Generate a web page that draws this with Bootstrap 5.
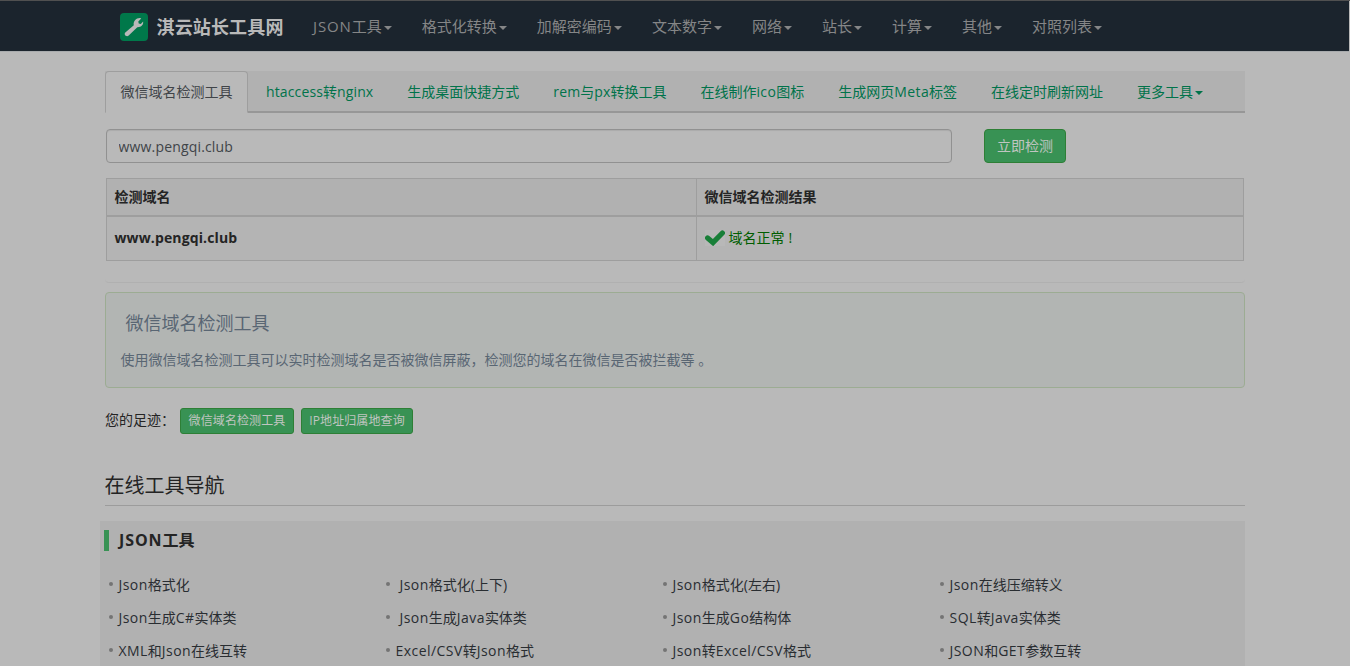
<!DOCTYPE html>
<html lang="zh-CN">
<head>
<meta charset="utf-8">
<meta name="viewport" content="width=device-width, initial-scale=1">
<title>微信域名检测工具</title>
<link rel="stylesheet" href="https://cdn.jsdelivr.net/npm/bootstrap@5.3.0/dist/css/bootstrap.min.css">
<style>
body{background:#b9b9b9;color:#242424;font:14px/20px "Open Sans","Noto Sans CJK SC",sans-serif;height:666px;overflow:hidden;border-top:1px solid #505050}
a{text-decoration:none}
.lt{letter-spacing:.13px}
.tools .lt{letter-spacing:.45px}
.topbar .lt,.toolbox h2 .lt{letter-spacing:.9px}
.topbar{background:#1b242d;height:51px;border-bottom:1px solid #a8abad;margin-right:1px;padding:0}
.page{width:1140px;margin:0 auto}
.brand{font-size:18px;font-weight:700;color:#b9b9b9;width:193.5px;padding-left:15px;letter-spacing:.15px;white-space:nowrap;padding-top:1px}
.brand svg{margin-right:9px;flex:none}
.topbar .nav-link{font-size:15px;color:#858687;padding:15px;white-space:nowrap}
.caret{display:inline-block;border-top:4px solid;border-left:4px solid transparent;border-right:4px solid transparent;margin-left:2px;vertical-align:middle}
.tooltabs{background:#b1b1b1;margin-top:19px;height:42px;border-bottom:2px solid #979797}
.tooltabs .nav-link{color:#00734a;padding:10px 15px;border:1px solid transparent;margin:0 2px 0 0;white-space:nowrap;height:42px;border-radius:4px 4px 0 0}
.tooltabs .nav-link.active{background:#b9b9b9;color:#404448;border-color:#9e9e9e #9e9e9e #b9b9b9;padding-left:14.5px;padding-right:14.5px}
.tooltabs .short{letter-spacing:.4px}
.domain{width:846px;height:34px;border:1px solid #919191;background:#b9b9b9;color:#404448;font-size:14px;padding:6px 12px 6px 11.5px;border-radius:4px;box-shadow:inset 0 1px 1px rgba(0,0,0,.075);letter-spacing:.17px}
.btn-go,.btn-go:hover{background:#389254;border:1px solid #2e7f36;color:#c0c5c1;border-radius:4px}
.go{font-size:14px;line-height:20px;padding:6px 12px;margin-left:32px;width:82px;height:34px}
.step{font-size:12px;line-height:18px;padding:3px 7px;height:26px;border-radius:3px;white-space:nowrap;letter-spacing:.1px}
.result{width:1138px;margin:15px 1px 0;border-collapse:collapse;table-layout:fixed}
.result th,.result td{border:1px solid #9e9e9e;padding:8px 8px 8px 7.5px}
.result thead th{background:#b1b1b1;height:37px;padding-top:8px;padding-bottom:7px;border-bottom-width:2px}
.result tbody{background:#b4b4b4}
.result tbody td{height:45px}
.ok{color:#005d00}
.ok svg{background:#b8b8b8;margin-right:4px}
.panelend{height:22px;border-bottom:1px solid #b0b0b0;border-radius:0 0 4px 4px}
.intro{border:1px solid #9cac93;border-radius:4px;background:#b2b5b3;color:#596673;height:96px;margin-top:9px;padding:19px 14.5px}
.intro h1{font-size:18px;line-height:22px;margin:0 0 16px 5px;font-weight:400}
.navtitle{font-size:20px;line-height:28px;font-weight:400;margin:38px 0 0 -.5px;padding-bottom:5px;border-bottom:1px solid #9c9c9c}
.toolbox{background:#b1b1b1;margin:15px 0 0 -5px;height:160px;padding:9px 0 0 4px}
.toolbox h2{font-size:16px;line-height:21px;font-weight:700;border-left:5px solid #389254;padding-left:10px;margin:0 0 17px}
.tools{display:grid;grid-template-columns:repeat(4,277px);grid-auto-rows:33px;margin:0;padding:0 0 0 5px;list-style:none}
.tools li{line-height:33px;color:#292d31;white-space:nowrap;display:flex;align-items:center}
.tools li::before{content:"";width:4px;height:4px;border-radius:50%;background:#747474;margin:0 5.5px 1px 0;flex:none}
</style>
</head>
<body>
<nav class="topbar">
  <div class="page d-flex">
    <a href="#" class="brand d-flex align-items-center"><svg width="28" height="28" viewBox="0 0 28 28"><rect width="28" height="28" rx="4" fill="#00784a"/><path fill="#b9b9b9" d="M5.300 19.600 13.800 12.200c-.8-3.800 2.300-7.300 6.400-7.100l1 .3-2.900 3 .4 2 2.100.5 2.300-2.400c.6 3.500-2.100 5.900-5.800 5.700L8.700 22.600c-2.200 1.900-5.300-.9-3.400-3z"/></svg>淇云站长工具网</a>
    <div class="d-flex">
      <a class="nav-link" href="#"><span class="lt">JSON</span>工具<i class="caret"></i></a>
      <a class="nav-link" href="#">格式化转换<i class="caret"></i></a>
      <a class="nav-link" href="#">加解密编码<i class="caret"></i></a>
      <a class="nav-link" href="#">文本数字<i class="caret"></i></a>
      <a class="nav-link" href="#">网络<i class="caret"></i></a>
      <a class="nav-link" href="#">站长<i class="caret"></i></a>
      <a class="nav-link" href="#">计算<i class="caret"></i></a>
      <a class="nav-link" href="#">其他<i class="caret"></i></a>
      <a class="nav-link" href="#">对照列表<i class="caret"></i></a>
    </div>
  </div>
</nav>
<main class="page">
  <div class="tooltabs d-flex">
    <a class="nav-link active" href="#">微信域名检测工具</a>
    <a class="nav-link" href="#"><span class="lt">htaccess</span>转<span class="lt">nginx</span></a>
    <a class="nav-link" href="#">生成桌面快捷方式</a>
    <a class="nav-link" href="#"><span class="lt">rem</span>与<span class="lt">px</span>转换工具</a>
    <a class="nav-link" href="#">在线制作<span class="lt short">ico</span>图标</a>
    <a class="nav-link" href="#">生成网页<span class="lt short">Meta</span>标签</a>
    <a class="nav-link" href="#">在线定时刷新网址</a>
    <a class="nav-link" href="#">更多工具<i class="caret"></i></a>
  </div>
  <div class="d-flex" style="margin:16px 0 0 1px">
    <input class="domain" value="www.pengqi.club" aria-label="域名">
    <button class="btn btn-go go">立即检测</button>
  </div>
  <table class="result">
    <colgroup><col style="width:590px"><col></colgroup>
    <thead><tr><th>检测域名</th><th>微信域名检测结果</th></tr></thead>
    <tbody><tr><td><b class="lt">www.pengqi.club</b></td><td><div class="ok d-flex align-items-center"><svg width="20" height="16" viewBox="0 0 20 16"><path d="M2.600 8 8 12.600 17.400 3" fill="none" stroke="#187f38" stroke-width="5.200" stroke-linecap="round"/></svg>域名正常<span class="ps-1">!</span></div></td></tr></tbody>
  </table>
  <div class="panelend"></div>
  <section class="intro"><h1>微信域名检测工具</h1><div>使用微信域名检测工具可以实时检测域名是否被微信屏蔽，检测您的域名在微信是否被拦截等 。</div></section>
  <div class="d-flex" style="margin-top:20px"><span style="width:75px;margin-top:2px">您的足迹：</span><a class="btn btn-go step" style="width:114px" href="#">微信域名检测工具</a><a class="btn btn-go step" style="width:112px;margin-left:7px" href="#"><span class="lt">IP</span>地址归属地查询</a></div>
  <h2 class="navtitle">在线工具导航</h2>
  <section class="toolbox">
    <h2><span class="lt">JSON</span>工具</h2>
    <ul class="tools">
      <li><span><span class="lt">Json</span>格式化</span></li><li><span class="ps-1"><span class="lt">Json</span>格式化(上下)</span></li><li><span><span class="lt">Json</span>格式化(左右)</span></li><li><span><span class="lt">Json</span>在线压缩转义</span></li>
      <li><span><span class="lt">Json</span>生成<span class="lt">C#</span>实体类</span></li><li><span class="ps-1"><span class="lt">Json</span>生成<span class="lt">Java</span>实体类</span></li><li><span><span class="lt">Json</span>生成<span class="lt">Go</span>结构体</span></li><li><span><span class="lt">SQL</span>转<span class="lt">Java</span>实体类</span></li>
      <li><span><span class="lt">XML</span>和<span class="lt">Json</span>在线互转</span></li><li><span><span class="lt">Excel/CSV</span>转<span class="lt">Json</span>格式</span></li><li><span><span class="lt">Json</span>转<span class="lt">Excel/CSV</span>格式</span></li><li><span><span class="lt">JSON</span>和<span class="lt">GET</span>参数互转</span></li>
    </ul>
  </section>
</main>
<script src="https://cdn.jsdelivr.net/npm/bootstrap@5.3.0/dist/js/bootstrap.bundle.min.js"></script>
</body>
</html>
